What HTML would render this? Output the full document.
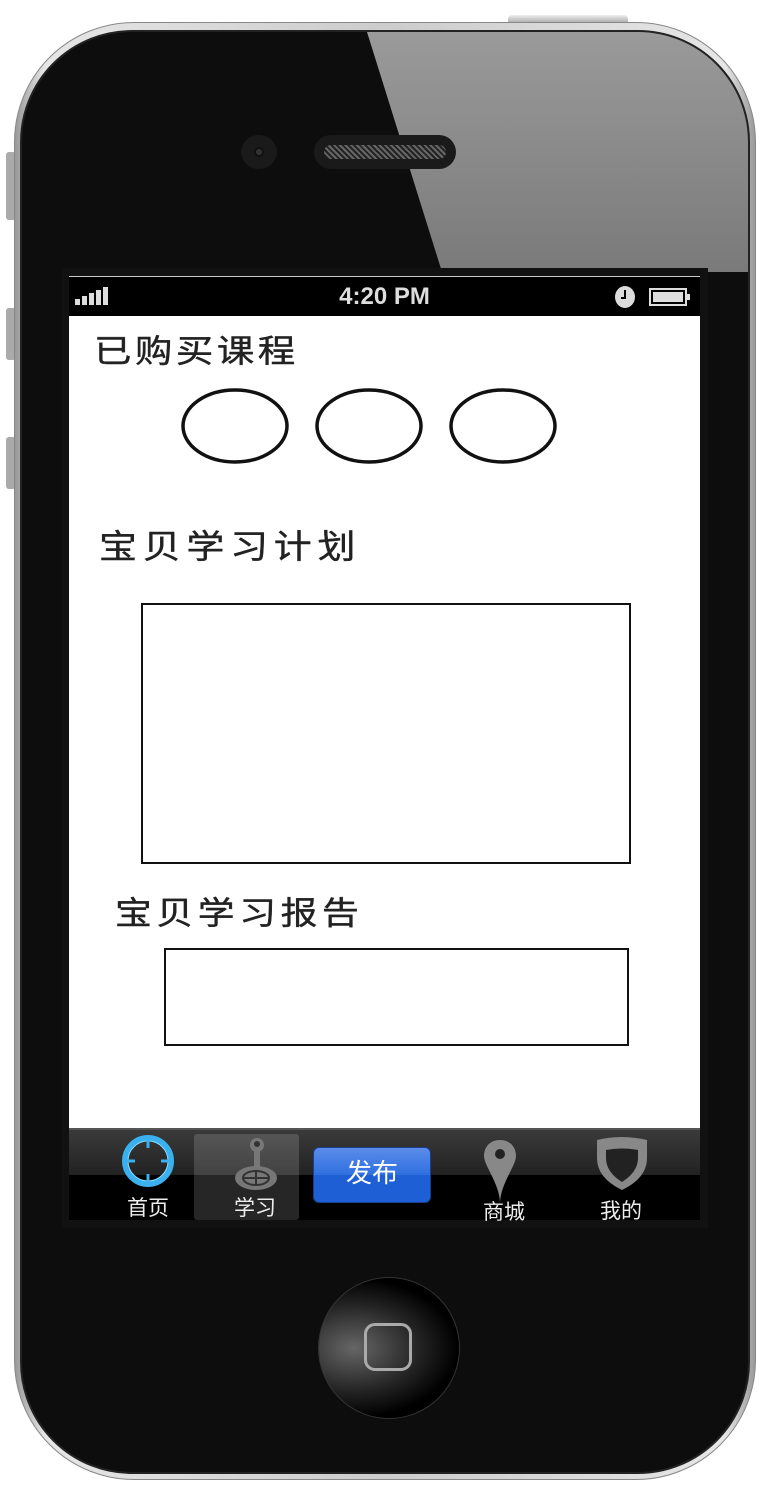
<!DOCTYPE html>
<html><head><meta charset="utf-8"><style>
*{margin:0;padding:0;box-sizing:border-box}
body{width:773px;height:1503px;background:#fff;position:relative;overflow:hidden;font-family:"Liberation Sans","Noto Sans CJK SC",sans-serif}
.abs{position:absolute}
.body{left:14px;top:22px;width:742px;height:1458px;border-radius:120px;background:linear-gradient(90deg,#999,#e6e6e6 4%,#ccc 50%,#e6e6e6 96%,#999);border:1px solid #888}
.inner{left:20px;top:30px;width:730px;height:1444px;border-radius:112px;background:#0d0d0d;overflow:hidden;border:2px solid #222}
.glare{left:0;top:0;width:730px;height:240px;background:linear-gradient(180deg,#9a9a9a,#7a7a7a);clip-path:polygon(345px 0,730px 0,730px 240px,420px 240px)}
.cjk{font-family:"Liberation Sans","Noto Sans CJK SC",sans-serif;color:#222;transform-origin:0 0;-webkit-text-stroke:0.4px #222;white-space:nowrap}
</style></head><body>
<div class="abs" style="left:508px;top:15px;width:120px;height:10px;background:linear-gradient(#eee,#999);border-radius:4px 4px 0 0"></div>
<div class="abs" style="left:6px;top:152px;width:10px;height:68px;background:#aaa;border-radius:3px"></div>
<div class="abs" style="left:6px;top:308px;width:10px;height:52px;background:#aaa;border-radius:3px"></div>
<div class="abs" style="left:6px;top:437px;width:10px;height:52px;background:#aaa;border-radius:3px"></div>
<div class="abs body"></div>
<div class="abs inner"><div class="abs glare"></div></div>
<div class="abs" style="left:241px;top:135px;width:36px;height:34px;border-radius:50%;background:#1a1a1a"><div class="abs" style="left:13px;top:12px;width:10px;height:10px;border-radius:50%;background:#333;border:2px solid #111"></div></div>
<div class="abs" style="left:314px;top:135px;width:142px;height:34px;border-radius:17px;background:#1a1a1a"><div class="abs" style="left:10px;top:10px;width:122px;height:14px;border-radius:7px;background:repeating-linear-gradient(45deg,#666 0 2px,#222 2px 4px)"></div></div>
<div class="abs" style="left:62px;top:268px;width:646px;height:960px;background:#111"></div>
<div class="abs" style="left:69px;top:276px;width:631px;height:40px;background:#000;border-top:1px solid #ccc">
 <svg class="abs" style="left:6px;top:10px" width="40" height="20"><rect x="0" y="12" width="5" height="6" fill="#ddd"/><rect x="7" y="9" width="5" height="9" fill="#ddd"/><rect x="14" y="6" width="5" height="12" fill="#ddd"/><rect x="21" y="3" width="5" height="15" fill="#ddd"/><rect x="28" y="0" width="5" height="18" fill="#ddd"/></svg>
 <div class="abs" style="left:0;width:631px;top:6px;text-align:center;color:#ddd;font-weight:bold;font-size:24px">4:20 PM</div>
 <svg class="abs" style="left:545px;top:8px" width="80" height="24"><ellipse cx="11" cy="12" rx="10" ry="11" fill="#ddd"/><path d="M11 5v8h-4" stroke="#000" stroke-width="2" fill="none"/><rect x="36" y="4" width="36" height="16" fill="none" stroke="#ddd" stroke-width="2"/><rect x="39" y="7" width="30" height="10" fill="#ddd"/><rect x="72" y="9" width="4" height="6" fill="#ddd"/></svg>
</div>
<div class="abs" style="left:69px;top:316px;width:631px;height:812px;background:#fff">
 <div class="abs cjk" style="left:25px;top:10px;font-size:32px;letter-spacing:3px;transform:scaleX(1.17)">已购买课程</div>
 <svg class="abs" style="left:100px;top:68px" width="400" height="84"><g fill="none" stroke="#111" stroke-width="3.5"><ellipse cx="66" cy="42" rx="52" ry="36"/><ellipse cx="200" cy="42" rx="52" ry="36"/><ellipse cx="334" cy="42" rx="52" ry="36"/></g></svg>
 <div class="abs cjk" style="left:30px;top:204px;font-size:33px;letter-spacing:5px;transform:scaleX(1.15)">宝贝学习计划</div>
 <div class="abs" style="left:72px;top:287px;width:490px;height:261px;border:2px solid #111"></div>
 <div class="abs cjk" style="left:46px;top:572px;font-size:32px;letter-spacing:4px;transform:scaleX(1.15)">宝贝学习报告</div>
 <div class="abs" style="left:95px;top:632px;width:465px;height:98px;border:2px solid #111"></div>
</div>
<div class="abs" style="left:69px;top:1128px;width:631px;height:92px;background:linear-gradient(#3a3a3a,#222 50%,#000 50%,#000);border-top:2px solid #555">
 <svg class="abs" style="left:52px;top:4px" width="56" height="56"><circle cx="27" cy="27" r="23" fill="none" stroke="#3ab0ee" stroke-width="6"/><circle cx="27" cy="27" r="20" fill="none" stroke="#8ddcff" stroke-width="1"/><g stroke="#3ab0ee" stroke-width="3"><path d="M27 4v10M27 40v10M4 27h10M40 27h10"/></g></svg>
 <div class="abs" style="left:58px;top:62px;color:#eee;font-size:21px">首页</div>
 <div class="abs" style="left:125px;top:4px;width:105px;height:86px;background:rgba(255,255,255,0.15);border-radius:3px"></div>
 <svg class="abs" style="left:160px;top:4px" width="50" height="58"><circle cx="28" cy="11" r="7" fill="#777"/><rect x="25" y="14" width="6" height="22" fill="#777"/><ellipse cx="27" cy="44" rx="21" ry="12" fill="#777"/><ellipse cx="27" cy="44" rx="13" ry="7" fill="none" stroke="#333" stroke-width="2"/><path d="M27 36v16M14 44h26" stroke="#333" stroke-width="2"/><circle cx="28" cy="10" r="3" fill="#333"/></svg>
 <div class="abs" style="left:165px;top:62px;color:#eee;font-size:21px">学习</div>
 <div class="abs" style="left:244px;top:17px;width:118px;height:56px;border-radius:6px;background:linear-gradient(#5b8cea,#2e6fe0 50%,#1f5fd6 50%);border:1px solid #1a3e8a;color:#fff;font-size:26px;text-align:center;line-height:50px">发布</div>
 <svg class="abs" style="left:412px;top:8px" width="40" height="66"><path d="M19 2C9 2 3 9 3 18c0 10 16 28 16 48C19 46 35 28 35 18 35 9 29 2 19 2z" fill="#888"/><circle cx="19" cy="16" r="5" fill="#222"/></svg>
 <div class="abs" style="left:414px;top:66px;color:#eee;font-size:21px">商城</div>
 <svg class="abs" style="left:525px;top:6px" width="56" height="56"><path d="M3 4q24 -6 50 0v18q0 20 -25 32q-25 -12 -25 -32z" fill="#888"/><path d="M12 14q16 -3 32 0v8q0 14 -16 24q-16 -10 -16 -24z" fill="#222"/></svg>
 <div class="abs" style="left:531px;top:65px;color:#eee;font-size:21px">我的</div>
</div>
<div class="abs" style="left:318px;top:1277px;width:142px;height:142px;border-radius:50%;background:radial-gradient(ellipse at 25% 50%,#666,#222 45%,#000 70%);border:1px solid #333"></div>
<div class="abs" style="left:364px;top:1323px;width:48px;height:48px;border:3px solid #aaa;border-radius:11px"></div>
</body></html>
